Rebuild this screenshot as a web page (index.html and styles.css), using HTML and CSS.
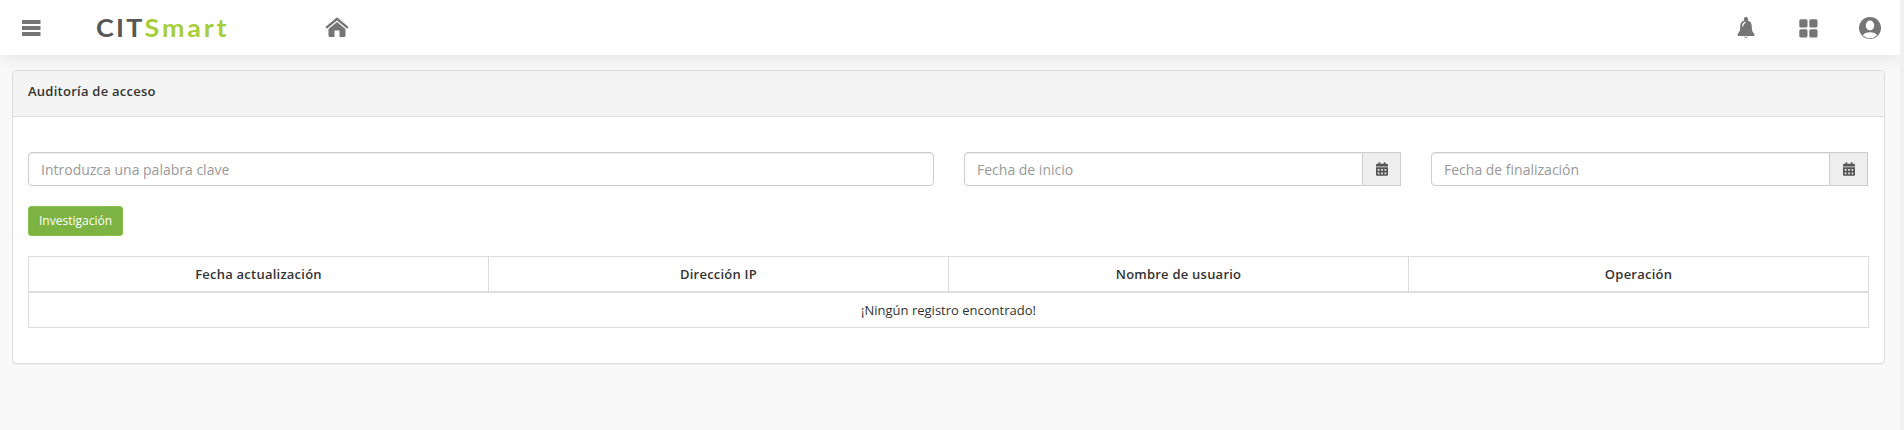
FILE: index.html
```html
<!DOCTYPE html>
<html lang="es">
<head>
<meta charset="utf-8">
<title>Auditoría de acceso</title>
<link rel="stylesheet" href="styles.css">
</head>
<body>
<svg width="0" height="0" class="defs"><symbol id="calendar" viewBox="0 0 448 512"><path d="M0 464c0 26.500 21.500 48 48 48h352c26.500 0 48-21.500 48-48V192H0v272zm320-196c0-6.600 5.400-12 12-12h40c6.600 0 12 5.400 12 12v40c0 6.600-5.400 12-12 12h-40c-6.600 0-12-5.400-12-12v-40zm0 128c0-6.600 5.400-12 12-12h40c6.600 0 12 5.400 12 12v40c0 6.600-5.400 12-12 12h-40c-6.600 0-12-5.400-12-12v-40zM192 268c0-6.600 5.400-12 12-12h40c6.600 0 12 5.400 12 12v40c0 6.600-5.400 12-12 12h-40c-6.600 0-12-5.400-12-12v-40zm0 128c0-6.600 5.400-12 12-12h40c6.600 0 12 5.400 12 12v40c0 6.600-5.400 12-12 12h-40c-6.600 0-12-5.400-12-12v-40zM64 268c0-6.600 5.400-12 12-12h40c6.600 0 12 5.400 12 12v40c0 6.600-5.400 12-12 12H76c-6.600 0-12-5.400-12-12v-40zm0 128c0-6.600 5.400-12 12-12h40c6.600 0 12 5.400 12 12v40c0 6.600-5.400 12-12 12H76c-6.600 0-12-5.400-12-12v-40zM400 64h-48V16c0-8.800-7.200-16-16-16h-32c-8.800 0-16 7.200-16 16v48H160V16c0-8.800-7.200-16-16-16h-32c-8.800 0-16 7.200-16 16v48H48C21.500 64 0 85.500 0 112v48h448v-48c0-26.500-21.500-48-48-48z"/></symbol></svg>
<div class="page">
  <header class="topbar">
    <svg class="menu-icon" width="20" height="18" viewBox="0 0 20 18"><path d="M1 1h18.500v4H1zM1 7h18.500v4H1zM1 13h18.500v4H1z"/></svg>
    <div class="logo"><span class="logo-dark">CIT</span><span class="logo-green">Smart</span></div>
    <svg class="home-icon" width="24" height="21" viewBox="0 0 24 21"><path d="M12 .3 23.6 10l-1.5 1.7L12 3.6 1.9 11.700.4 10z"/><path d="M12 5 20.500 12v6.500q0 1.500-1.500 1.500h-4.500v-6.500h-5V20H5q-1.500 0-1.500-1.500V12z"/></svg>
    <nav class="actions">
      <svg class="bell-icon" width="18" height="22" viewBox="0 0 18 22"><path d="M9 0a1.900 1.900 0 0 1 1.500 3.200C13.500 4 14.800 6.500 14.800 9.500c0 4 .6 5.500 2.500 7.200V19H.7v-2.300c1.900-1.700 2.500-3.200 2.500-7.200 0-3 1.300-5.500 4.300-6.300A1.900 1.900 0 0 1 9 0z"/><path class="shine" d="M5.700 9.500C5.700 7 6.700 5.700 8.500 5.300"/><path class="clapper" d="M7.200 19.700q1.800 2.400 3.600 0"/></svg>
      <svg class="grid-icon" width="19" height="19" viewBox="0 0 19 19"><rect x=".3" y=".3" width="8.200" height="8.200" rx="1.500"/><rect x="10.300" y=".3" width="8.200" height="8.200" rx="1.500"/><rect x=".3" y="10.200" width="8.200" height="8.200" rx="1.500"/><rect x="10.300" y="10.200" width="8.200" height="8.200" rx="1.500"/></svg>
      <svg class="user-icon" width="22" height="22" viewBox="0 0 22 22"><circle cx="11" cy="11" r="11"/><ellipse class="cut" cx="11" cy="8.500" rx="4.200" ry="4.900"/><path class="cut" d="M3.800 18.200q2-3 7.200-3t7.200 3Q15 21.200 11 21.200t-7.200-3z"/></svg>
    </nav>
  </header>
  <main class="panel">
    <h1 class="panel-heading">Auditoría de acceso</h1>
    <div class="panel-body">
      <form class="filters">
        <input class="field" type="text" placeholder="Introduzca una palabra clave">
        <div class="date-group">
          <input class="field" type="text" placeholder="Fecha de inicio">
          <span class="addon"><svg width="12" height="14"><use href="#calendar"/></svg></span>
        </div>
        <div class="date-group">
          <input class="field" type="text" placeholder="Fecha de finalización">
          <span class="addon"><svg width="12" height="14"><use href="#calendar"/></svg></span>
        </div>
      </form>
      <button class="search" type="button">Investigación</button>
      <table class="records">
        <thead><tr><th>Fecha actualización</th><th>Dirección IP</th><th>Nombre de usuario</th><th>Operación</th></tr></thead>
        <tbody><tr><td colspan="4">¡Ningún registro encontrado!</td></tr></tbody>
      </table>
    </div>
  </main>
</div>
</body>
</html>
```
FILE: styles.css
```css
* { box-sizing: border-box; }
body {
  margin: 0;
  height: 430px;
  overflow: hidden;
  background: #f1f1f1;
  color: #333;
  font: 13px/20px "Open Sans", "Noto Sans", sans-serif;
}
.defs { display: none; }
.page { width: 1900px; height: 430px; overflow: hidden; background: #f9f9f9; }
.topbar {
  display: flex;
  align-items: center;
  height: 55px;
  padding: 0 19px 0 21px;
  background: #fff;
  box-shadow: 0 0 20px rgba(0, 0, 0, .12);
}
.topbar svg { display: block; fill: #757575; }
.logo {
  width: 228px;
  margin-left: 55px;
  font: bold 24px/30px Lato, sans-serif;
  letter-spacing: 2px;
  transform: scaleX(1.12);
  transform-origin: 0 50%;
}
.logo-dark { color: #575757; }
.logo-green { color: #a6ce39; letter-spacing: 2.5px; }
.home-icon { margin-left: 1px; }
.actions { display: flex; align-items: center; margin-left: auto; }
.bell-icon { margin-top: 1px; }
.grid-icon { margin: 1px 41px 0 44px; }
.user-icon { margin-top: 1px; }
.bell-icon .shine { fill: none; stroke: #fff; stroke-width: 1.2; }
.bell-icon .clapper { fill: none; stroke: #999; stroke-width: 1; }
.user-icon .cut { fill: #fff; }
.panel {
  margin: 15px 15px 0 12px;
  height: 294px;
  border: 1px solid #ddd;
  border-radius: 4px;
  background: #fff;
  box-shadow: 0 1px 1px rgba(0, 0, 0, .05);
}
.panel-heading {
  margin: 0;
  height: 46px;
  padding: 10px 15px;
  border-bottom: 1px solid #ddd;
  border-radius: 3px 3px 0 0;
  background: #f4f4f4;
  font-size: 13px;
  font-weight: 600;
  line-height: 20px;
  letter-spacing: .25px;
}
.panel-body { padding: 35px 15px 0; }
.filters {
  display: grid;
  grid-template-columns: 906px 437px 437px;
  column-gap: 30px;
}
.field {
  width: 100%;
  min-width: 0;
  height: 34px;
  padding: 6px 12px;
  border: 1px solid #ccc;
  border-radius: 4px;
  background: #fff;
  box-shadow: inset 0 1px 1px rgba(0, 0, 0, .075);
  font: 14px/20px "Open Sans", "Noto Sans", sans-serif;
}
.field::placeholder { color: #999; opacity: 1; }
.date-group { display: flex; }
.date-group .field { border-radius: 4px 0 0 4px; }
.addon {
  display: flex;
  flex: none;
  align-items: center;
  justify-content: center;
  width: 38px;
  height: 34px;
  border: 1px solid #ccc;
  border-left: 0;
  background: #eee;
}
.addon svg { fill: #555; }
.search {
  display: block;
  width: 95px;
  height: 30px;
  margin: 20px 0;
  padding: 0;
  border: 1px solid #8bc34a;
  border-radius: 3px;
  background: #7cb342;
  color: #fff;
  font: 12px/18px "Open Sans", "Noto Sans", sans-serif;
}
.records {
  width: 1841px;
  border-collapse: collapse;
  table-layout: fixed;
}
.records th, .records td {
  padding: 8px;
  border: 1px solid #ddd;
  text-align: center;
  line-height: 18px;
}
.records th { border-bottom-width: 2px; font-weight: 600; letter-spacing: .23px; }
```
